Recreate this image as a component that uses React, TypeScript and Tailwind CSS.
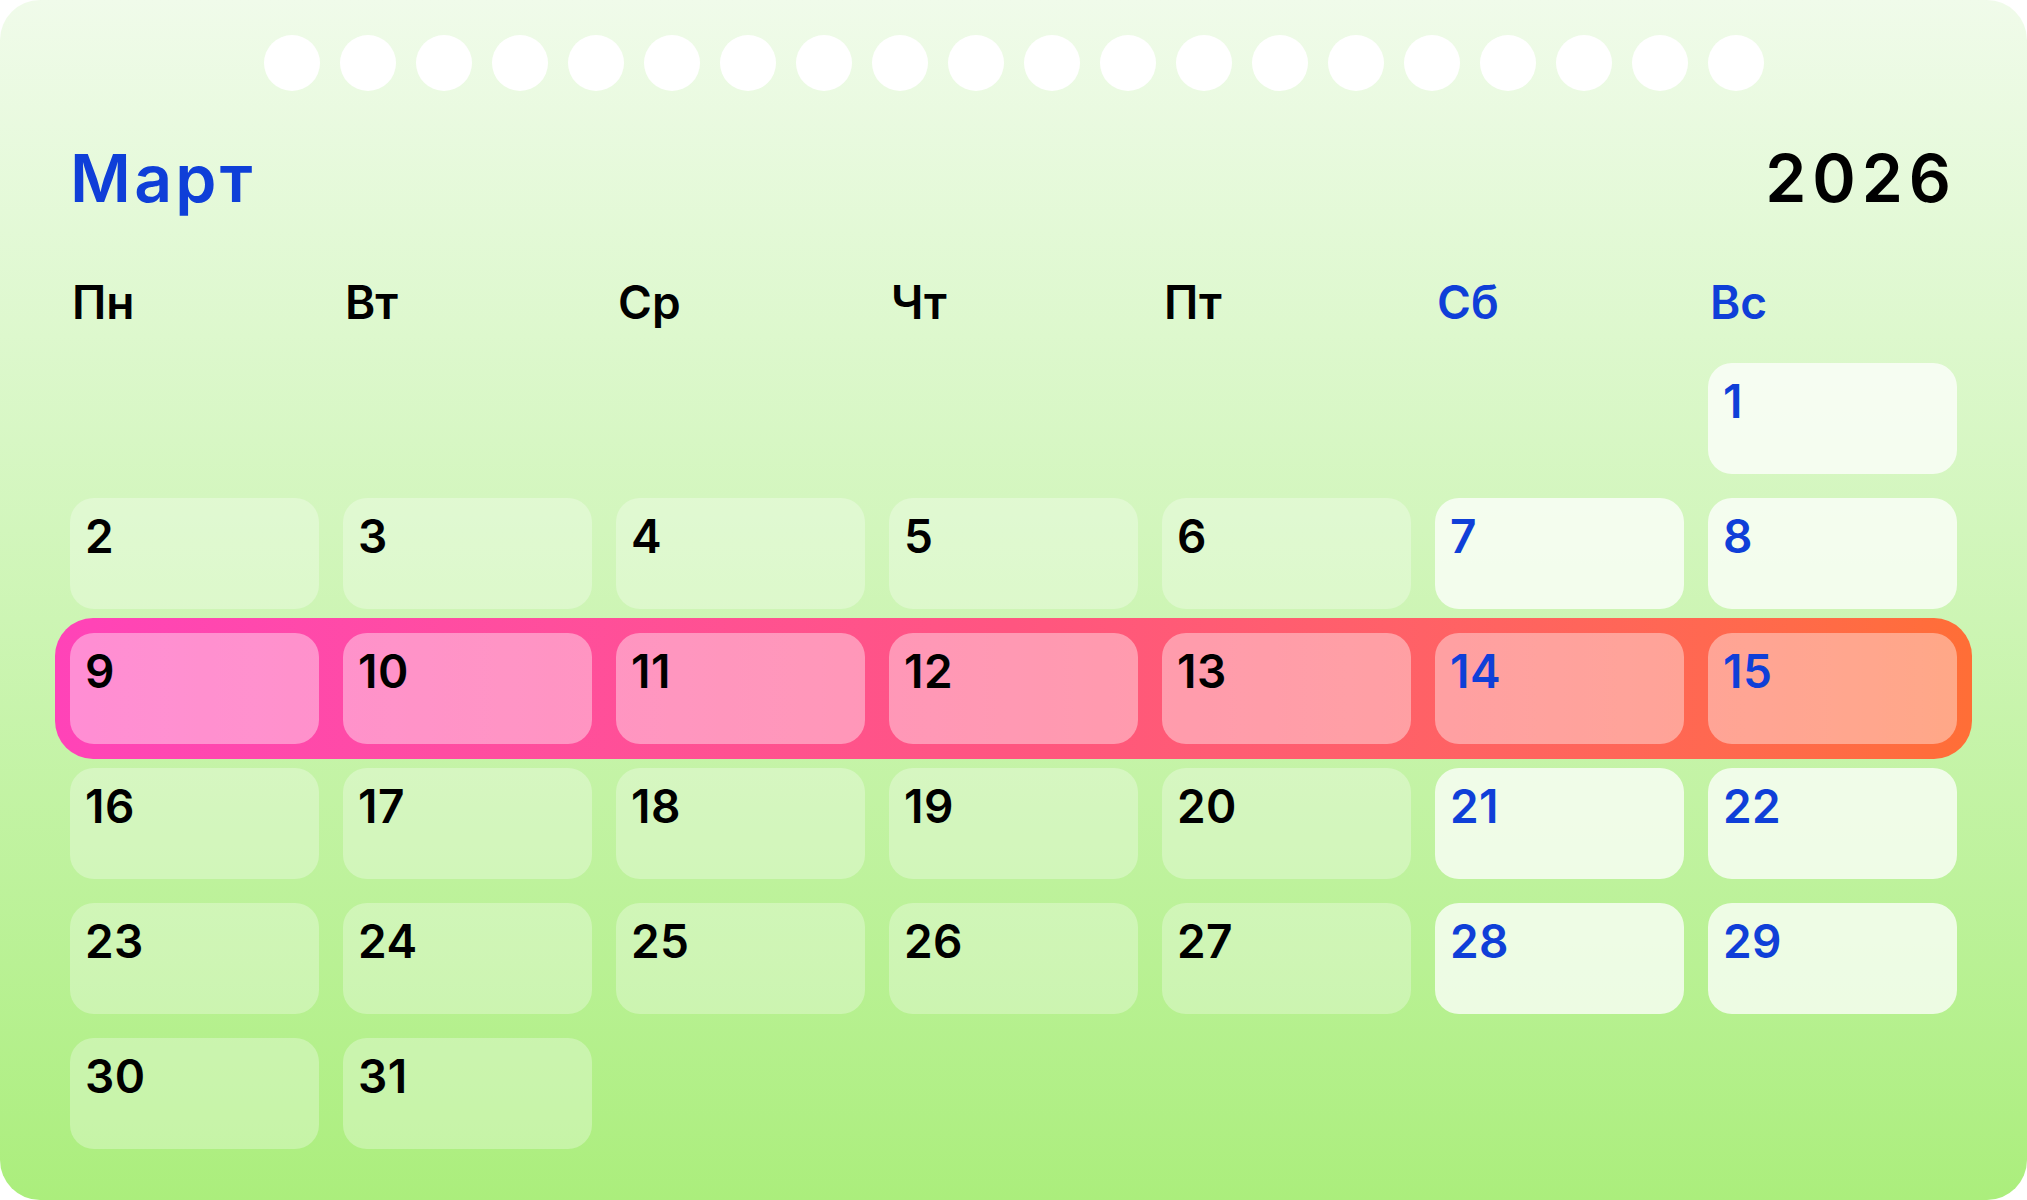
import React from "react";

const weeks: (number | null)[][] = [
  [null, null, null, null, null, null, 1],
  [2, 3, 4, 5, 6, 7, 8],
  [9, 10, 11, 12, 13, 14, 15],
  [16, 17, 18, 19, 20, 21, 22],
  [23, 24, 25, 26, 27, 28, 29],
  [30, 31, null, null, null, null, null],
];

const days = ["Пн", "Вт", "Ср", "Чт", "Пт", "Сб", "Вс"];

function Cell({ n, col, band }: { n: number | null; col: number; band: boolean }) {
  if (n === null) return <div className="h-[111px] w-[249px]" />;
  const weekend = col >= 5;
  const bg = band ? "bg-white/40" : weekend ? "bg-white/75" : "bg-white/30";
  return (
    <div className={`h-[111px] w-[249px] rounded-[24px] ${bg} pl-[15px] pt-[15px]`}>
      <span
        className={`block text-[46px] leading-none font-semibold tracking-[0.01em] ${
          weekend ? "text-[#0f3fd8]" : "text-black"
        }`}
      >
        {n}
      </span>
    </div>
  );
}

export default function App() {
  return (
    <div className="w-full h-[1200px] bg-white font-['Inter','Noto_Sans',sans-serif]">
      <div className="w-[2027px] h-[1200px] rounded-[40px] bg-linear-to-b from-[#f0fbea] to-[#abee7c] px-[70px] flex flex-col">
        <div className="flex justify-center gap-5 pt-[35px]">
          {Array.from({ length: 20 }).map((_, i) => (
            <div key={i} className="w-14 h-14 rounded-full bg-white" />
          ))}
        </div>
        <div className="mt-[54px] flex justify-between items-start">
          <div className="text-[66px] leading-none font-semibold text-[#0f3fd8] tracking-[0.05em]">
            Март
          </div>
          <div className="text-[66px] leading-none font-semibold text-black tracking-[0.09em]">
            2026
          </div>
        </div>
        <div className="mt-[68px] flex gap-6">
          {days.map((d, i) => (
            <div
              key={d}
              className={`w-[249px] text-[46px] leading-none font-semibold pl-[2px] ${
                i >= 5 ? "text-[#0f3fd8]" : "text-black"
              }`}
            >
              {d}
            </div>
          ))}
        </div>
        <div className="mt-[38px] flex flex-col gap-6">
          {weeks.map((w, r) =>
            r === 2 ? (
              <div
                key={r}
                className="-m-[15px] p-[15px] rounded-[38px] bg-linear-to-r from-[#ff43b8] via-[#ff5580] to-[#ff6e36] flex gap-6"
              >
                {w.map((n, c) => (
                  <Cell key={c} n={n} col={c} band />
                ))}
              </div>
            ) : (
              <div key={r} className="flex gap-6">
                {w.map((n, c) => (
                  <Cell key={c} n={n} col={c} band={false} />
                ))}
              </div>
            )
          )}
        </div>
      </div>
    </div>
  );
}
